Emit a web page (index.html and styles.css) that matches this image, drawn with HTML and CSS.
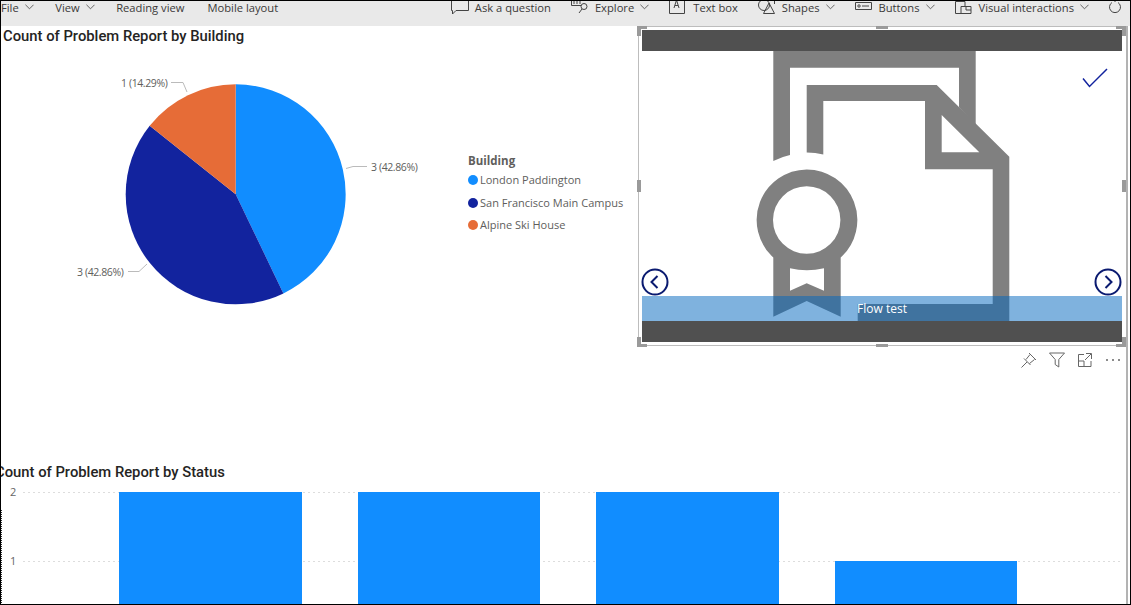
FILE: index.html
```html
<!DOCTYPE html>
<html lang="en">
<head>
    <meta charset="UTF-8">
    <title>Problem Report</title>
    <link rel="stylesheet" href="styles.css">
</head>
<body>
<div class="frame">

    <div class="toolbar">
        <div class="tool tool-left"><span>File</span><svg class="chev" viewBox="0 0 10 6"><path d="M.5.5 5 5 9.5.5"/></svg></div>
        <div class="tool tool-left"><span>View</span><svg class="chev" viewBox="0 0 10 6"><path d="M.5.5 5 5 9.5.5"/></svg></div>
        <div class="tool tool-wide"><span>Reading view</span></div>
        <div class="tool"><span>Mobile layout</span></div>

        <div class="tool push">
            <svg class="tool-icon" viewBox="0 0 18 14"><path d="M17.5-3V9.500H5L1.500 13V9.500H.5V-3"/></svg>
            <span>Ask a question</span>
        </div>
        <div class="tool">
            <svg class="tool-icon" viewBox="0 0 18 14"><path d="M.5-2V4.500H10M3-1V3M6-3V3M9-1V3"/><circle cx="13" cy="5.500" r="3"/><path d="M11 8 8 12"/></svg>
            <span>Explore</span>
            <svg class="chev" viewBox="0 0 10 6"><path d="M.5.5 5 5 9.5.5"/></svg>
        </div>
        <div class="tool">
            <svg class="tool-icon" viewBox="0 0 18 14"><path d="M11-1H15.500V12.500H.5V-1H4M5 7 7.500-1 10 7M6 4.500H9"/></svg>
            <span>Text box</span>
        </div>
        <div class="tool">
            <svg class="tool-icon" viewBox="0 0 18 14"><circle cx="6" cy="4" r="5.500"/><path d="M11 2 16.500 12.500H5.500ZM10-1H16.500V3"/></svg>
            <span>Shapes</span>
            <svg class="chev" viewBox="0 0 10 6"><path d="M.5.5 5 5 9.500.5"/></svg>
        </div>
        <div class="tool">
            <svg class="tool-icon" viewBox="0 0 18 14"><path d="M.5 1.500H16.500V8.500H.5Z"/><path d="M7 5H14"/><circle cx="4" cy="5" r="1.200"/></svg>
            <span>Buttons</span>
            <svg class="chev" viewBox="0 0 10 6"><path d="M.5.5 5 5 9.500.5"/></svg>
        </div>
        <div class="tool">
            <svg class="tool-icon" viewBox="0 0 18 14"><path d="M.5 12.500V.5H10V5M.5 12.500H6"/><path d="M6 5.500H16V12.500H6ZM11 5.500V9H16"/></svg>
            <span>Visual interactions</span>
            <svg class="chev" viewBox="0 0 10 6"><path d="M.5.5 5 5 9.500.5"/></svg>
        </div>
        <svg class="tool-icon ring" viewBox="0 0 14 14"><path d="M4 1.500A5.500 5.500 0 1 0 10 1.500M7 0V1"/></svg>
    </div>

    <div class="canvas">
        <div class="top-row">
            <section class="pie-visual">
                <h2 class="title">Count of Problem Report by Building</h2>
                <div class="pie-body">
                    <svg class="pie" viewBox="1 50 460 270">
                        <path fill="#118dff" d="M235.700 194.300V84.300A110 110 0 0 1 283.400 293.400Z"/>
                        <path fill="#12239e" d="M235.700 194.300 283.400 293.400A110 110 0 0 1 149.700 125.700Z"/>
                        <path fill="#e66c37" d="M235.700 194.300 149.700 125.700A110 110 0 0 1 235.700 84.300Z"/>
                        <path class="leader" d="M346 168.500 353 166.500H367"/>
                        <path class="leader" d="M171 82.500H183L187 92"/>
                        <path class="leader" d="M128 271.500H139L147 264"/>
                        <text class="pie-label" x="371" y="171">3 (42.86%)</text>
                        <text class="pie-label" x="121" y="87">1 (14.29%)</text>
                        <text class="pie-label" x="77" y="276">3 (42.86%)</text>
                    </svg>
                    <div class="legend">
                        <div class="legend-title">Building</div>
                        <div class="legend-item"><i class="dot dot-blue"></i>London Paddington</div>
                        <div class="legend-item"><i class="dot dot-navy"></i>San Francisco Main Campus</div>
                        <div class="legend-item"><i class="dot dot-orange"></i>Alpine Ski House</div>
                    </div>
                </div>
            </section>

            <div class="card-column">
                <section class="selected">
                    <div class="dark-bar"></div>
                    <div class="stage">
                        <svg class="cert" viewBox="642 51 480 270">
                            <path d="M773.300 51H975.700V125L959 107.300V67.700H790V155A68 68 0 0 0 773.300 161Z"/>
                            <path d="M806.700 152.500A68 68 0 0 1 823.300 154.500V101H925V169.300H992.700V304H857.700V321H1009.300V156.700L936.700 85H806.700ZM941.700 115 979.300 152.300H941.700Z" fill-rule="evenodd"/>
                            <path d="M806.700 169.400A50.600 50.600 0 0 1 840.700 257.500V316.700L806.700 301 773.300 316.700V257.500A50.600 50.600 0 0 1 806.700 169.400ZM806.700 186.300A33.700 33.700 0 1 0 806.700 253.700 33.700 33.700 0 1 0 806.700 186.300ZM790 268.300V290.700L806.700 283.300 824 290.700V268.300Q806.700 272 790 268.300Z" fill-rule="evenodd"/>
                        </svg>
                        <svg class="check" viewBox="0 0 26 20"><path d="M1 10.500 7.500 18.500 25 1"/></svg>
                        <svg class="nav nav-prev" viewBox="0 0 28 28"><circle cx="14" cy="14" r="12.500"/><path d="M16.500 8 10.500 14 16.500 20"/></svg>
                        <svg class="nav nav-next" viewBox="0 0 28 28"><circle cx="14" cy="14" r="12.500"/><path d="M11.500 8 17.500 14 11.500 20"/></svg>
                        <div class="band">Flow test</div>
                    </div>
                    <div class="dark-bar"></div>
                    <i class="handle corner tl"></i><i class="handle corner tr"></i>
                    <i class="handle corner bl"></i><i class="handle corner br"></i>
                    <i class="handle mid-h top"></i><i class="handle mid-h bottom"></i>
                    <i class="handle mid-v left"></i><i class="handle mid-v right"></i>
                </section>
                <div class="visual-header">
                    <svg viewBox="0 0 16 16"><path d="M.5 15.500 6 10M3 6.500 9.500 13M5 7.500 9 2.500M8.500 11.500 13.500 7.500M8 1 15 8"/></svg>
                    <svg viewBox="0 0 16 16"><path d="M.5 1H15.500L9.800 7.500V15L6.200 12.500V7.500Z"/></svg>
                    <svg viewBox="0 0 16 16"><path d="M7 2.500H1.500V14.500H14V9M9 1.500H14.500V7M14 2 8 8M1.500 9H7V14.500"/></svg>
                    <svg class="dots" viewBox="0 0 16 4"><path d="M1 2H3M7 2H9M13 2H15"/></svg>
                </div>
            </div>
        </div>

        <section class="bar-visual">
            <h2 class="title title-clipped">Count of Problem Report by Status</h2>
            <div class="plot">
                <div class="grid-line line-2"><span class="tick">2</span></div>
                <div class="grid-line line-1"><span class="tick">1</span></div>
                <i class="edge-mark"></i>
                <div class="bars">
                    <div class="bar bar-two"></div>
                    <div class="bar bar-two"></div>
                    <div class="bar bar-two"></div>
                    <div class="bar bar-one"></div>
                </div>
            </div>
        </section>
    </div>
</div>
</body>
</html>
```

FILE: styles.css
```css
* {
    box-sizing: border-box;
}
body {
    margin: 0;
    font-family: "Open Sans", "Noto Sans", Arial, sans-serif;
    background: #fff;
}
.frame {
    width: 1131px;
    height: 605px;
    border: 1px solid #000;
    display: flex;
    flex-direction: column;
    overflow: hidden;
    background: #fff;
}

/* ribbon, cut off at the top like the capture */
.toolbar {
    height: 25px;
    flex: none;
    display: flex;
    align-items: flex-start;
    gap: 20px;
    background: #e9e9e9;
    padding-right: 8px;
    font-size: 11.200px;
    line-height: 14px;
    color: #3b3a39;
    overflow: hidden;
}
.tool {
    display: flex;
    align-items: flex-start;
    height: 14px;
    white-space: nowrap;
}
.tool-left {
    margin-right: 1.500px;
}
.tool-wide {
    margin-right: 3px;
}
.push {
    margin-left: auto;
}
.chev {
    width: 9px;
    height: 6px;
    margin: 3px 0 0 6px;
    fill: none;
    stroke: #555;
    stroke-width: 1;
}
.tool-icon {
    width: 18px;
    height: 14px;
    margin-right: 6px;
    fill: none;
    stroke: #444;
    stroke-width: 1;
    overflow: visible;
}
.ring {
    width: 14px;
    margin: 0 0 0 -1px;
}

.canvas {
    flex: 1;
    min-height: 0;
    display: flex;
    flex-direction: column;
    margin-right: 2px;
    border-right: 2px solid #b3b3b3;
}
.top-row {
    display: flex;
    flex: none;
}
.title {
    margin: 0;
    font-family: Roboto, Arial, sans-serif;
    font-weight: 500;
    font-size: 14.800px;
    line-height: 18px;
    color: #252423;
}

.pie-visual {
    width: 637px;
    flex: none;
}
.pie-visual .title {
    padding: 0 0 0 2px;
    height: 24px;
    padding-top: 1px;
}
.pie-body {
    display: flex;
}
.pie {
    width: 460px;
    height: 270px;
    flex: none;
}
.leader {
    fill: none;
    stroke: #bbb;
    stroke-width: 1;
}
.pie-label {
    font-size: 10.500px;
    letter-spacing: -.4px;
    fill: #605e5c;
}
.legend {
    margin: 103px 0 0 7px;
    font-size: 11px;
    line-height: 16px;
    color: #605e5c;
    white-space: nowrap;
}
.legend-title {
    font-weight: 700;
    font-size: 11.500px;
    height: 19px;
}
.legend-item {
    height: 22.500px;
    display: flex;
    align-items: flex-start;
}
.dot {
    width: 10px;
    height: 10px;
    border-radius: 50%;
    margin: 3px 2px 0 0;
}
.dot-blue {
    background: #118dff;
}
.dot-navy {
    background: #12239e;
}
.dot-orange {
    background: #e66c37;
}

.card-column {
    flex: 1;
}
.selected {
    position: relative;
    height: 320px;
    display: flex;
    flex-direction: column;
    padding: 3px;
    border: 1px solid #bdbdbd;
    border-right: none;
}
.dark-bar {
    height: 21px;
    flex: none;
    width: 480px;
    background: #505050;
}
.stage {
    position: relative;
    width: 480px;
    height: 270px;
    flex: none;
    display: flex;
    align-items: flex-end;
}
.cert {
    position: absolute;
    inset: 0;
    width: 480px;
    height: 270px;
    fill: #808080;
}
.check {
    position: absolute;
    top: 17px;
    left: 440px;
    width: 26px;
    height: 20px;
    fill: none;
    stroke: #12239e;
    stroke-width: 1.500;
}
.nav {
    position: absolute;
    top: 217px;
    width: 28px;
    height: 28px;
    fill: #fff;
    stroke: #0a1a70;
    stroke-width: 2;
}
.nav-prev {
    left: -1px;
}
.nav-next {
    left: 452px;
}
.band {
    position: relative;
    width: 100%;
    height: 25px;
    background: rgba(0, 102, 190, .5);
    color: #fff;
    font-size: 12px;
    line-height: 25px;
    text-align: center;
}

.handle {
    position: absolute;
    background: #9a9a9a;
}
.corner {
    width: 10px;
    height: 10px;
    background: linear-gradient(#9a9a9a, #9a9a9a) 0 0 / 100% 3px no-repeat,
                linear-gradient(#9a9a9a, #9a9a9a) 0 0 / 4px 100% no-repeat;
}
.tl {
    top: -1px;
    left: -2px;
}
.tr {
    top: -1px;
    right: 0;
    transform: scaleX(-1);
}
.bl {
    bottom: -2px;
    left: -2px;
    transform: scaleY(-1);
}
.br {
    bottom: -2px;
    right: 0;
    transform: scale(-1);
}
.mid-h {
    width: 12px;
    height: 3px;
    left: 237px;
}
.top {
    top: -1px;
}
.bottom {
    bottom: -2px;
}
.mid-v {
    width: 4px;
    height: 12px;
    top: 153px;
}
.left {
    left: -2px;
}
.right {
    right: 0;
}

.visual-header {
    display: flex;
    justify-content: flex-end;
    align-items: center;
    gap: 12px;
    height: 24px;
    padding: 4px 5px 0 0;
}
.visual-header svg {
    width: 16px;
    height: 16px;
    fill: none;
    stroke: #666;
    stroke-width: 1;
}
.visual-header .dots {
    height: 4px;
    stroke-width: 1.500;
}

.bar-visual {
    margin-top: auto;
}
.title-clipped {
    margin-left: -6px;
    height: 30px;
    padding-top: 1px;
}
.plot {
    position: relative;
    height: 112px;
}
.grid-line {
    position: absolute;
    left: 22px;
    right: 4px;
    height: 1px;
    background: repeating-linear-gradient(90deg, #ddd 0 2px, transparent 2px 5px);
}
.line-2 {
    top: 0;
}
.line-1 {
    top: 69px;
}
.tick {
    position: absolute;
    left: -13px;
    top: -7px;
    font-size: 11px;
    line-height: 14px;
    color: #666;
}
/* scrap of the neighbouring window at the left edge */
.edge-mark {
    position: absolute;
    left: 0;
    top: 18px;
    bottom: -1px;
    border-left: 1px dotted #333;
}
.bars {
    position: absolute;
    top: 0;
    left: 118px;
    display: grid;
    grid-template-columns: repeat(4, 182.500px);
    column-gap: 56px;
    height: 100%;
    align-items: start;
}
.bar {
    background: #118dff;
}
.bar-two {
    height: 138px;
}
.bar-one {
    height: 69px;
    margin-top: 69px;
}
```
